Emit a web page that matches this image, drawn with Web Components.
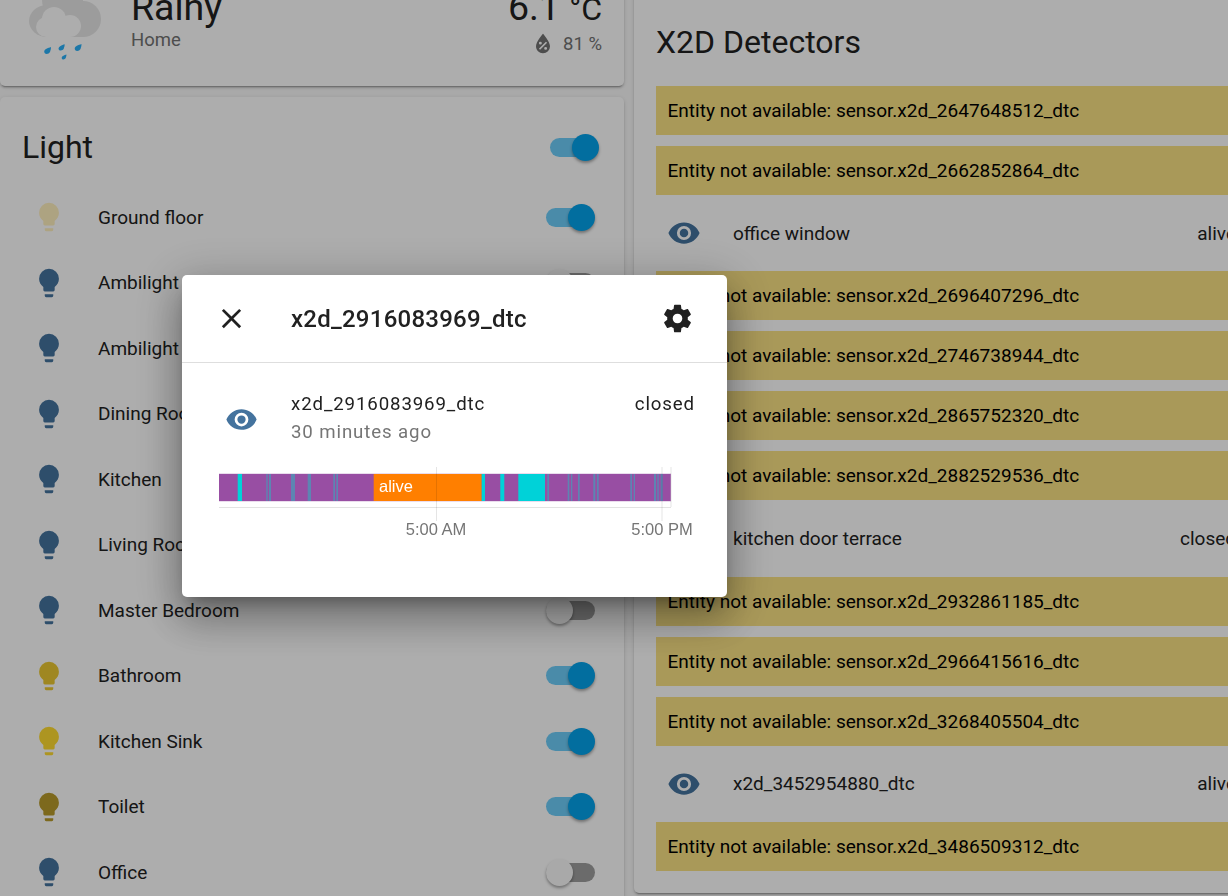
<!DOCTYPE html>
<html>
<head>
<meta charset="utf-8">
<style>
  html, body { margin: 0; height: 100%; overflow: hidden; background: #fafafa; }
  body { font-family: Roboto, "Liberation Sans", sans-serif; color: #212121; }
</style>
</head>
<body>
<lovelace-view>
  <div slot="left">
    <weather-card></weather-card>
    <light-card></light-card>
  </div>
  <detector-card slot="right"></detector-card>
</lovelace-view>
<more-info-dialog></more-info-dialog>

<script>
const ICONS = {
  eye: 'M12,9A3,3 0 0,0 9,12A3,3 0 0,0 12,15A3,3 0 0,0 15,12A3,3 0 0,0 12,9M12,17A5,5 0 0,1 7,12A5,5 0 0,1 12,7A5,5 0 0,1 17,12A5,5 0 0,1 12,17M12,4.5C7,4.5 2.73,7.61 1,12C2.73,16.39 7,19.5 12,19.5C17,19.5 21.27,16.39 23,12C21.27,7.61 17,4.5 12,4.5Z',
  bulb: 'M12,2A7,7 0 0,0 5,9C5,11.38 6.19,13.47 8,14.74V17A1,1 0 0,0 9,18H15A1,1 0 0,0 16,17V14.74C17.81,13.47 19,11.38 19,9A7,7 0 0,0 12,2M9,21A1,1 0 0,0 10,22H14A1,1 0 0,0 15,21V20H9V21Z',
  close: 'M19,6.41L17.59,5L12,10.59L6.41,5L5,6.41L10.59,12L5,17.59L6.41,19L12,13.41L17.59,19L19,17.59L13.41,12L19,6.41Z',
  cog: 'M12,15.5A3.5,3.5 0 0,1 8.5,12A3.5,3.5 0 0,1 12,8.5A3.5,3.5 0 0,1 15.5,12A3.5,3.5 0 0,1 12,15.5M19.43,12.97C19.47,12.65 19.5,12.33 19.5,12C19.5,11.67 19.47,11.34 19.43,11L21.54,9.37C21.73,9.22 21.78,8.95 21.66,8.73L19.66,5.27C19.54,5.05 19.27,4.96 19.05,5.05L16.56,6.05C16.04,5.66 15.5,5.32 14.87,5.07L14.5,2.42C14.46,2.18 14.25,2 14,2H10C9.75,2 9.54,2.18 9.5,2.42L9.13,5.07C8.5,5.32 7.96,5.66 7.44,6.05L4.95,5.05C4.73,4.96 4.46,5.05 4.34,5.27L2.34,8.73C2.21,8.95 2.27,9.22 2.46,9.37L4.57,11C4.53,11.34 4.5,11.67 4.5,12C4.5,12.33 4.53,12.65 4.57,12.97L2.46,14.63C2.27,14.78 2.21,15.05 2.34,15.27L4.34,18.73C4.46,18.95 4.73,19.03 4.95,18.95L7.44,17.94C7.96,18.34 8.5,18.68 9.13,18.93L9.5,21.58C9.54,21.82 9.75,22 10,22H14C14.25,22 14.46,21.82 14.5,21.58L14.87,18.93C15.5,18.67 16.04,18.34 16.56,17.94L19.05,18.95C19.27,19.03 19.54,18.95 19.66,18.73L21.66,15.27C21.78,15.05 21.73,14.78 21.54,14.63L19.43,12.97Z',
  water: 'M12,3.25C12,3.25 6,10 6,14C6,17.32 8.69,20 12,20A6,6 0 0,0 18,14C18,10 12,3.25 12,3.25M14.47,9.97L15.53,11.03L9.53,17.03L8.47,15.97M9.75,10A1.25,1.25 0 0,1 11,11.25A1.25,1.25 0 0,1 9.75,12.5A1.25,1.25 0 0,1 8.5,11.25A1.25,1.25 0 0,1 9.75,10M14.25,14.5A1.25,1.25 0 0,1 15.5,15.75A1.25,1.25 0 0,1 14.25,17A1.25,1.25 0 0,1 13,15.75A1.25,1.25 0 0,1 14.25,14.5Z'
};

class MdiIcon extends HTMLElement {
  constructor() {
    super();
    this.attachShadow({ mode: 'open' });
  }
  connectedCallback() {
    const size = this.getAttribute('size') || 24;
    this.shadowRoot.innerHTML = `
      <style>
        :host { display: inline-flex; flex: none; width: ${size}px; height: ${size}px; color: inherit; }
        svg { width: 100%; height: 100%; fill: currentColor; display: block; }
      </style>
      <svg viewBox="0 0 24 24"><path d="${ICONS[this.getAttribute('name')]}"></path></svg>`;
  }
}
customElements.define('mdi-icon', MdiIcon);

class ToggleSwitch extends HTMLElement {
  constructor() {
    super();
    this.attachShadow({ mode: 'open' });
  }
  connectedCallback() {
    this.shadowRoot.innerHTML = `
      <style>
        :host { display: flex; align-items: center; flex: none; width: 49px; height: 27px; position: relative; }
        .track { width: 100%; height: 19px; border-radius: 10px; background: #000; opacity: .38; }
        .thumb { position: absolute; left: 0; top: 0; width: 27px; height: 27px; border-radius: 50%; background: #fafafa;
          box-shadow: 0 2px 3px rgba(0,0,0,.35); }
        :host([on]) .track { background: #03a9f4; opacity: .58; width: 44px; }
        :host([on]) .thumb { left: auto; right: 0; background: #03a2ea; }
      </style>
      <div class="track"></div><div class="thumb"></div>`;
  }
}
customElements.define('toggle-switch', ToggleSwitch);

class LovelaceView extends HTMLElement {
  constructor() {
    super();
    this.attachShadow({ mode: 'open' }).innerHTML = `
      <style>
        :host { display: grid; grid-template-columns: 624px 624px; column-gap: 10px; width: 1258px; margin-top: -14px; }
      </style>
      <slot name="left"></slot>
      <slot name="right"></slot>`;
  }
}
customElements.define('lovelace-view', LovelaceView);

const CARD_CSS = `
  .card { background: #fff; border-radius: 5px;
    box-shadow: 0 2px 2px rgba(0,0,0,.14), 0 1px 5px rgba(0,0,0,.12), 0 3px 1px -2px rgba(0,0,0,.2); }
  h1 { margin: 0; font-size: 32px; font-weight: 400; line-height: 56px; }
`;

class WeatherCard extends HTMLElement {
  constructor() {
    super();
    this.attachShadow({ mode: 'open' }).innerHTML = `
      <style>
        ${CARD_CSS}
        :host { display: block; margin-bottom: 11px; }
        .card { height: 100px; display: flex; padding: 0 22px 0 29px; box-sizing: border-box; }
        .icon { width: 72px; height: 76px; flex: none; margin-right: 30px; }
        .main { flex: 1; }
        .state { font-size: 37.5px; line-height: 44px; margin-top: -1px; }
        .unit { font-size: 32px; }
        .sub { font-size: 18.5px; line-height: 24px; color: #727272; margin-top: -1px; }
        .right { text-align: right; }
        .hum { display: flex; justify-content: flex-end; align-items: center; gap: 5px; margin-top: -1px; font-size: 18.5px; line-height: 24px; color: #727272; }
        .hum mdi-icon { color: #727272; margin-right: 1px; }
      </style>
      <div class="card">
        <svg class="icon" viewBox="29 -14 72 76">
          <g fill="#e6e6e6">
            <ellipse cx="47" cy="21" rx="18" ry="16"/>
            <circle cx="83" cy="19" r="18"/>
            <circle cx="62" cy="0" r="20"/>
            <rect x="47" y="0" width="36" height="37"/>
          </g>
          <g fill="#fff">
            <circle cx="46" cy="27" r="10"/>
            <circle cx="70" cy="26" r="11"/>
            <circle cx="54" cy="19" r="12"/>
            <rect x="46" y="20" width="24" height="17"/>
          </g>
          <g fill="#2ab0f8">
            <path transform="translate(47.5 50.5)" d="M3.5-3.5C3.5-1 3-.5 2.5 1.5 1.5 3.5-1.5 4-2.7 2.7-4 1.3-3-.7-1.5-1.5.5-2.5 2-3 3.5-3.5Z"/>
            <path transform="translate(61.5 47.5) scale(.9)" d="M3.5-3.5C3.5-1 3-.5 2.5 1.5 1.5 3.5-1.5 4-2.7 2.7-4 1.3-3-.7-1.5-1.5.5-2.5 2-3 3.5-3.5Z"/>
            <path transform="translate(78 47.5)" d="M3.5-3.5C3.5-1 3-.5 2.5 1.5 1.5 3.5-1.5 4-2.7 2.7-4 1.3-3-.7-1.5-1.5.5-2.5 2-3 3.5-3.5Z"/>
            <path transform="translate(64 57) scale(.7)" d="M3.5-3.5C3.5-1 3-.5 2.5 1.5 1.5 3.5-1.5 4-2.7 2.7-4 1.3-3-.7-1.5-1.5.5-2.5 2-3 3.5-3.5Z"/>
          </g>
        </svg>
        <div class="main">
          <div class="state">Rainy</div>
          <div class="sub">Home</div>
        </div>
        <div class="right">
          <div class="state">6.1 <span class="unit">°C</span></div>
          <div class="hum"><mdi-icon name="water" size="28"></mdi-icon><span>81 %</span></div>
        </div>
      </div>`;
  }
}
customElements.define('weather-card', WeatherCard);

class LightRow extends HTMLElement {
  constructor() {
    super();
    this.attachShadow({ mode: 'open' });
  }
  connectedCallback() {
    const color = this.getAttribute('color') || '#44739e';
    this.shadowRoot.innerHTML = `
      <style>
        :host { display: flex; align-items: center; height: 65.5px; padding: 0 29px 0 22px; }
        mdi-icon { color: ${color}; margin-right: 32px; margin-left: 10px; flex: none; }
        span { flex: 1; font-size: 19px; white-space: nowrap; }
      </style>
      <mdi-icon name="bulb" size="34"></mdi-icon>
      <span><slot></slot></span>
      <toggle-switch ${this.hasAttribute('on') ? 'on' : ''}></toggle-switch>`;
  }
}
customElements.define('light-row', LightRow);

class LightCard extends HTMLElement {
  constructor() {
    super();
    this.attachShadow({ mode: 'open' }).innerHTML = `
      <style>
        ${CARD_CSS}
        :host { display: block; }
        .card { height: 900px; padding-top: 22px; box-sizing: border-box; }
        header { display: flex; justify-content: space-between; align-items: center; padding: 0 25px 0 22px; margin-bottom: 9.5px; }
      </style>
      <div class="card">
        <header><h1>Light</h1><toggle-switch on></toggle-switch></header>
        <light-row color="#fff0be" on>Ground floor</light-row>
        <light-row>Ambilight Left</light-row>
        <light-row>Ambilight Right</light-row>
        <light-row>Dining Room</light-row>
        <light-row>Kitchen</light-row>
        <light-row>Living Room</light-row>
        <light-row>Master Bedroom</light-row>
        <light-row color="#ebc832" on>Bathroom</light-row>
        <light-row color="#ffdc32" on>Kitchen Sink</light-row>
        <light-row color="#b89b2c" on>Toilet</light-row>
        <light-row>Office</light-row>
      </div>`;
  }
}
customElements.define('light-card', LightCard);

class EntityWarning extends HTMLElement {
  constructor() {
    super();
    this.attachShadow({ mode: 'open' }).innerHTML = `
      <style>
        :host { display: flex; align-items: center; height: 49px; padding: 0 11.5px; background: #fae284; color: #000; font-size: 19.05px; white-space: nowrap; }
      </style>
      Entity not available: sensor.<slot></slot>`;
  }
}
customElements.define('entity-warning', EntityWarning);

class SensorRow extends HTMLElement {
  constructor() {
    super();
    this.attachShadow({ mode: 'open' });
  }
  connectedCallback() {
    this.shadowRoot.innerHTML = `
      <style>
        :host { display: flex; align-items: center; height: 54.33px; font-size: 19px; }
        mdi-icon { color: #44739e; margin: 0 32px 0 11px; }
        span { flex: 1; }
      </style>
      <mdi-icon name="eye" size="34"></mdi-icon>
      <span><slot></slot></span>
      <div>${this.getAttribute('state')}</div>`;
  }
}
customElements.define('sensor-row', SensorRow);

class DetectorCard extends HTMLElement {
  constructor() {
    super();
    this.attachShadow({ mode: 'open' }).innerHTML = `
      <style>
        ${CARD_CSS}
        :host { display: block; }
        .card { padding: 28px 22px 22px; height: 907px; box-sizing: border-box; }
        h1 { margin-bottom: 16px; }
        .list { display: flex; flex-direction: column; gap: 11px; }
      </style>
      <div class="card">
        <h1>X2D Detectors</h1>
        <div class="list">
          <entity-warning>x2d_2647648512_dtc</entity-warning>
          <entity-warning>x2d_2662852864_dtc</entity-warning>
          <sensor-row state="alive">office window</sensor-row>
          <entity-warning>x2d_2696407296_dtc</entity-warning>
          <entity-warning>x2d_2746738944_dtc</entity-warning>
          <entity-warning>x2d_2865752320_dtc</entity-warning>
          <entity-warning>x2d_2882529536_dtc</entity-warning>
          <sensor-row state="closed">kitchen door terrace</sensor-row>
          <entity-warning>x2d_2932861185_dtc</entity-warning>
          <entity-warning>x2d_2966415616_dtc</entity-warning>
          <entity-warning>x2d_3268405504_dtc</entity-warning>
          <sensor-row state="alive">x2d_3452954880_dtc</sensor-row>
          <entity-warning>x2d_3486509312_dtc</entity-warning>
        </div>
      </div>`;
  }
}
customElements.define('detector-card', DetectorCard);

class HistoryChart extends HTMLElement {
  constructor() {
    super();
    this.attachShadow({ mode: 'open' });
  }
  connectedCallback() {
    // x positions are page pixels minus the 219 where the chart starts
    const PURPLE = '#984ea3', CYAN = '#00d2d8', ORANGE = '#ff7f00', BLUE = '#5d85b2';
    const segs = [
      [0, 451.7, PURPLE], [18.7, 4.3, CYAN],
      [47.3, 1.4, BLUE], [50, 2, BLUE], [72, 4, BLUE], [88.7, 3.3, BLUE], [114.3, 1.7, BLUE], [117.3, 1.7, BLUE],
      [154.7, 108, ORANGE], [262.7, 3.3, CYAN],
      [281.3, 4, CYAN], [299.3, 26.7, CYAN],
      [328.3, 1.7, BLUE], [348.7, 1.6, BLUE], [352, 1.3, BLUE], [359, 1.7, BLUE], [374.3, 2, BLUE], [378, 1.7, BLUE],
      [411.3, 1.7, BLUE], [414.7, 1.3, BLUE], [435, 2, BLUE], [438.3, 1.4, BLUE], [441.7, 2, BLUE]
    ];
    const rects = segs.map(([x, w, c]) => `<rect x="${x}" y="7" width="${w}" height="27" fill="${c}"/>`).join('');
    this.shadowRoot.innerHTML = `
      <style>
        :host { display: block; width: 480px; height: 72px; }
        svg { display: block; overflow: visible; }
        .label { font-family: "Liberation Sans", Arial, sans-serif; font-size: 16.5px; fill: #757575; text-anchor: middle; }
        .alive { font-family: "Liberation Sans", Arial, sans-serif; font-size: 16.5px; fill: #fff; }
      </style>
      <svg width="480" height="72" viewBox="0 0 480 72">
        <rect x="0" y="6" width="452" height="29" fill="#984ea3" opacity=".2"/>
        ${rects}
        <text class="alive" x="160" y="25">alive</text>
        <line x1="0" x2="452" y1="40.5" y2="40.5" stroke="#e3e3e3"/>
        <line x1="217.5" x2="217.5" y1="0" y2="54" stroke="#000" stroke-opacity=".1"/>
        <line x1="443" x2="443" y1="0" y2="54" stroke="#000" stroke-opacity=".1"/>
        <line x1="452" x2="452" y1="0" y2="40" stroke="#000" stroke-opacity=".1"/>
        <text class="label" x="217" y="68">5:00 AM</text>
        <text class="label" x="443" y="68">5:00 PM</text>
      </svg>`;
  }
}
customElements.define('history-chart', HistoryChart);

class MoreInfoDialog extends HTMLElement {
  constructor() {
    super();
    this.attachShadow({ mode: 'open' }).innerHTML = `
      <style>
        :host { position: fixed; inset: 0; display: block; background: rgba(0,0,0,.32); padding: 275px 0 0 182px; box-sizing: border-box; }
        .dialog { width: 545px; height: 322px; background: #fff; border-radius: 5px; box-sizing: border-box;
          box-shadow: 0 11px 15px -7px rgba(0,0,0,.3), 0 24px 38px 3px rgba(0,0,0,.2), 0 9px 46px 8px rgba(0,0,0,.2); }
        header { display: flex; align-items: center; height: 87px; padding: 0 33px 0 32.5px; border-bottom: 1px solid #dedede; }
        header span { flex: 1; margin-left: 43.5px; font-size: 24px; font-weight: 500; letter-spacing: .25px; }
        header mdi-icon { color: #212121; }
        .entity { display: flex; padding: 27px 32px 0 27px; }
        .entity mdi-icon { color: #44739e; margin: 13px 33.5px 0 15.5px; }
        .info { flex: 1; }
        .name, .state, .ago { font-size: 18.67px; letter-spacing: .88px; line-height: 28px; }
        .ago { color: #757575; }
        history-chart { margin: 21px 0 0 37px; }
      </style>
      <div class="dialog">
        <header>
          <mdi-icon name="close" size="33"></mdi-icon>
          <span>x2d_2916083969_dtc</span>
          <mdi-icon name="cog" size="33"></mdi-icon>
        </header>
        <div class="entity">
          <mdi-icon name="eye" size="33"></mdi-icon>
          <div class="info">
            <div class="name">x2d_2916083969_dtc</div>
            <div class="ago">30 minutes ago</div>
          </div>
          <div class="state">closed</div>
        </div>
        <history-chart></history-chart>
      </div>`;
  }
}
customElements.define('more-info-dialog', MoreInfoDialog);
</script>
</body>
</html>
